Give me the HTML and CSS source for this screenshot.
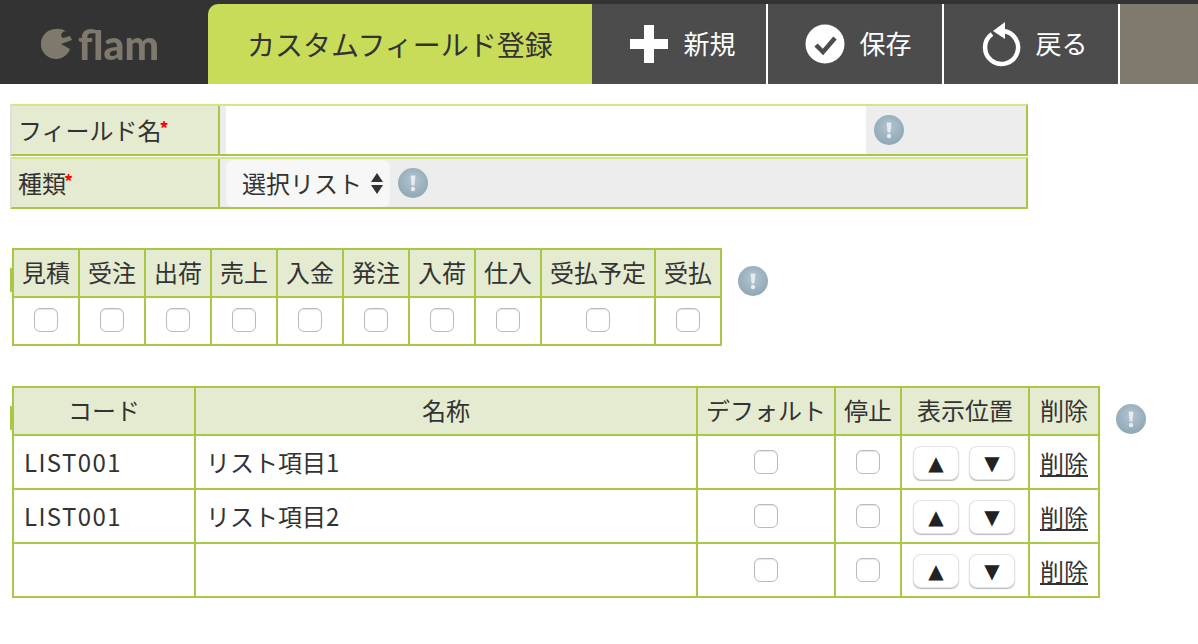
FILE: index.html
```html
<!DOCTYPE html>
<html lang="ja">
<head>
    <meta charset="UTF-8">
    <title>カスタムフィールド登録</title>
    <link rel="stylesheet" href="styles.css">
</head>
<body>

    <svg class="defs" width="0" height="0">
        <defs>
            <radialGradient id="infoFill" cx="50%" cy="40%" r="60%">
                <stop offset="0" stop-color="#b3c5d0"/>
                <stop offset="1" stop-color="#8fa7b6"/>
            </radialGradient>
            <g id="info">
                <circle cx="15" cy="15" r="15" fill="url(#infoFill)"/>
                <path d="M12.6 7.5h4.8l-1 10h-2.8z" fill="#e6ecef"/>
                <circle cx="15" cy="21" r="2.2" fill="#e6ecef"/>
            </g>
        </defs>
    </svg>

    <div class="header">
        <div class="logo">
            <svg class="logo-mark" width="32" height="32" viewBox="0 0 32 32">
                <path d="M15 1a15 15 0 1 0 14 20l-9-5 11-4-2-4-7 2a3 3 0 0 1 4-6A15 15 0 0 0 15 1z" fill="#7f786c"/>
            </svg>
            <span class="logo-text">flam</span>
        </div>
        <div class="tab">カスタムフィールド登録</div>
        <a href="#" class="tool">
            <svg width="40" height="40" viewBox="0 0 40 40"><path d="M15 1h10v14h14v10H25v14H15V25H1V15h14z" fill="#fff"/></svg>
            <span class="tool-label">新規</span>
        </a>
        <a href="#" class="tool">
            <svg width="40" height="40" viewBox="0 0 40 40"><circle cx="20" cy="20" r="19.5" fill="#fff"/><path d="M11 21l7 7 12-14" fill="none" stroke="#4c4c4c" stroke-width="4.5"/></svg>
            <span class="tool-label">保存</span>
        </a>
        <a href="#" class="tool">
            <svg width="40" height="46" viewBox="0 0 40 46"><path d="M11 13a16.5 16.5 0 1 0 11-3" fill="none" stroke="#fff" stroke-width="4.5"/><path d="M24 1v17L12 10z" fill="#fff"/></svg>
            <span class="tool-label">戻る</span>
        </a>
        <div class="tool-end"></div>
    </div>

    <div class="form-box">
        <div class="form-row">
            <div class="form-label">フィールド名<span class="req">*</span></div>
            <div class="form-value">
                <input type="text" class="text-input">
                <svg class="info-icon" viewBox="0 0 30 30"><use href="#info"/></svg>
            </div>
        </div>
        <div class="form-row">
            <div class="form-label">種類<span class="req">*</span></div>
            <div class="form-value">
                <div class="select-box">
                    <select class="kind-select">
                        <option>選択リスト</option>
                    </select>
                </div>
                <svg class="info-icon" viewBox="0 0 30 30"><use href="#info"/></svg>
            </div>
        </div>
    </div>

    <div class="table-row">
        <table class="grid usage-table">
            <colgroup>
                <col class="c66"><col class="c66"><col class="c66"><col class="c66"><col class="c66">
                <col class="c66"><col class="c66"><col class="c66"><col class="c114"><col class="c66">
            </colgroup>
            <tr>
                <th>見積</th><th>受注</th><th>出荷</th><th>売上</th><th>入金</th>
                <th>発注</th><th>入荷</th><th>仕入</th><th>受払予定</th><th>受払</th>
            </tr>
            <tr>
                <td class="center"><input type="checkbox" class="check"></td>
                <td class="center"><input type="checkbox" class="check"></td>
                <td class="center"><input type="checkbox" class="check"></td>
                <td class="center"><input type="checkbox" class="check"></td>
                <td class="center"><input type="checkbox" class="check"></td>
                <td class="center"><input type="checkbox" class="check"></td>
                <td class="center"><input type="checkbox" class="check"></td>
                <td class="center"><input type="checkbox" class="check"></td>
                <td class="center"><input type="checkbox" class="check"></td>
                <td class="center"><input type="checkbox" class="check"></td>
            </tr>
        </table>
        <svg class="info-icon" viewBox="0 0 30 30"><use href="#info"/></svg>
    </div>

    <div class="table-row">
        <table class="grid list-table">
            <colgroup>
                <col class="c182"><col class="c502"><col class="c138"><col class="c66"><col class="c128"><col class="c70">
            </colgroup>
            <tr>
                <th>コード</th><th>名称</th><th>デフォルト</th><th>停止</th><th>表示位置</th><th>削除</th>
            </tr>
            <tr>
                <td class="code">LIST001</td>
                <td>リスト項目1</td>
                <td class="center"><input type="checkbox" class="check"></td>
                <td class="center"><input type="checkbox" class="check"></td>
                <td class="center"><button class="move">▲</button><button class="move">▼</button></td>
                <td class="center"><a href="#" class="del">削除</a></td>
            </tr>
            <tr>
                <td class="code">LIST001</td>
                <td>リスト項目2</td>
                <td class="center"><input type="checkbox" class="check"></td>
                <td class="center"><input type="checkbox" class="check"></td>
                <td class="center"><button class="move">▲</button><button class="move">▼</button></td>
                <td class="center"><a href="#" class="del">削除</a></td>
            </tr>
            <tr>
                <td></td>
                <td></td>
                <td class="center"><input type="checkbox" class="check"></td>
                <td class="center"><input type="checkbox" class="check"></td>
                <td class="center"><button class="move">▲</button><button class="move">▼</button></td>
                <td class="center"><a href="#" class="del">削除</a></td>
            </tr>
        </table>
        <svg class="info-icon" viewBox="0 0 30 30"><use href="#info"/></svg>
    </div>

</body>
</html>
```

FILE: styles.css
```css
body {
    font-family: "Noto Sans CJK JP", "Noto Sans", sans-serif;
    font-size: 24px;
    color: #333;
    background-color: white;
    margin: 0;
    padding: 0;
}
.defs {
    position: absolute;
}
.header {
    display: flex;
    height: 80px;
    padding-top: 4px;
    background-color: #333;
}
.logo {
    display: flex;
    align-items: center;
    width: 208px;
    padding-left: 41px;
    box-sizing: border-box;
}
.logo-mark {
    filter: blur(0.6px);
}
.logo-text {
    margin-left: 5px;
    font-family: Lato, sans-serif;
    font-size: 41px;
    font-weight: 900;
    line-height: 1;
    color: #7f786c;
    filter: blur(0.6px);
}
.tab {
    width: 384px;
    box-sizing: border-box;
    text-align: center;
    line-height: 80px;
    font-size: 28px;
    background-color: #c8dc5a;
    border-radius: 10px 0 0 0;
}
.tool {
    display: flex;
    align-items: center;
    justify-content: center;
    gap: 14px;
    width: 176px;
    box-sizing: border-box;
    padding-left: 7px;
    border-right: 2px solid white;
    background-color: #4c4c4c;
    color: white;
    font-size: 26px;
    text-decoration: none;
}
.tool-label {
    margin-bottom: 3px;
}
.tool-end {
    flex: 1;
    background-color: #807a6e;
}
.form-box {
    width: 1018px;
    margin: 20px 0 39px 10px;
}
.form-row {
    display: flex;
    height: 48px;
    border-top: 2px solid #d3e883;
    border-bottom: 2px solid #a8c845;
    border-right: 2px solid #a8c845;
    border-left: 2px solid #e0e0e0;
}
.form-row + .form-row {
    margin-top: 1px;
}
.form-label {
    width: 208px;
    box-sizing: border-box;
    padding-left: 6px;
    line-height: 47px;
    background-color: #e4ebd1;
    border-right: 2px solid #a8c845;
}
.req {
    position: relative;
    top: -4px;
    margin-left: -2px;
    color: red;
    font-size: 18px;
    font-weight: bold;
}
.form-value {
    flex: 1;
    display: flex;
    align-items: center;
    gap: 8px;
    padding-left: 6px;
    background-color: #ededed;
}
.text-input {
    width: 640px;
    height: 48px;
    box-sizing: border-box;
    border: none;
    background-color: white;
}
.select-box {
    position: relative;
}
.select-box::before,
.select-box::after {
    content: "";
    position: absolute;
    right: 7px;
    border-left: 6px solid transparent;
    border-right: 6px solid transparent;
}
.select-box::before {
    top: 13px;
    border-bottom: 9px solid #333;
}
.select-box::after {
    bottom: 13px;
    border-top: 9px solid #333;
}
.kind-select {
    display: block;
    appearance: none;
    width: 164px;
    height: 47px;
    padding: 0 0 2px 16px;
    border: none;
    border-radius: 8px;
    background-color: #f7f7f7;
    color: #333;
    font-family: inherit;
    font-size: 24px;
}
.info-icon {
    width: 30px;
    height: 30px;
    flex: none;
    filter: blur(0.5px);
}
.table-row {
    position: relative;
    display: flex;
    margin: 0 0 40px 12px;
}
.table-row::before {
    content: "";
    position: absolute;
    left: -2px;
    top: 20px;
    width: 3px;
    height: 24px;
    background-color: #a8c845;
}
.table-row .info-icon {
    margin-left: 16px;
    margin-top: 18px;
}
.grid {
    table-layout: fixed;
    border-collapse: collapse;
}
.usage-table {
    width: 710px;
}
.list-table {
    width: 1088px;
}
.grid th,
.grid td {
    border: 2px solid #a8c845;
    padding: 0;
}
.grid th {
    height: 42px;
    padding-bottom: 4px;
    font-weight: normal;
    background-color: #e4ebd1;
}
.usage-table td {
    height: 46px;
}
.list-table td {
    height: 50px;
    padding: 0 0 2px 10px;
}
.list-table .code {
    letter-spacing: 1.4px;
}
.grid td.center {
    height: 52px;
    padding: 0;
    text-align: center;
}
.usage-table td.center {
    height: 46px;
}
.c66 { width: 66px; }
.c114 { width: 114px; }
.c182 { width: 182px; }
.c502 { width: 502px; }
.c138 { width: 138px; }
.c128 { width: 128px; }
.c70 { width: 70px; }
.check {
    appearance: none;
    display: inline-block;
    vertical-align: middle;
    width: 24px;
    height: 24px;
    margin: 0 0 6px;
    border: 1px solid #bbb;
    border-radius: 6px;
    background-color: white;
    box-shadow: inset 0 1px 1px rgba(0, 0, 0, 0.1);
}
.usage-table .check {
    margin-bottom: 8px;
}
.move {
    width: 46px;
    height: 34px;
    padding: 0;
    margin: 0 6px 2px 4px;
    vertical-align: middle;
    border: 1px solid #e2e2e2;
    border-radius: 8px;
    background-color: white;
    box-shadow: 0 1px 1px #bbb;
    color: #222;
    font-family: "DejaVu Sans", sans-serif;
    font-size: 20px;
    line-height: 1;
}
.del {
    color: #333;
}
```
